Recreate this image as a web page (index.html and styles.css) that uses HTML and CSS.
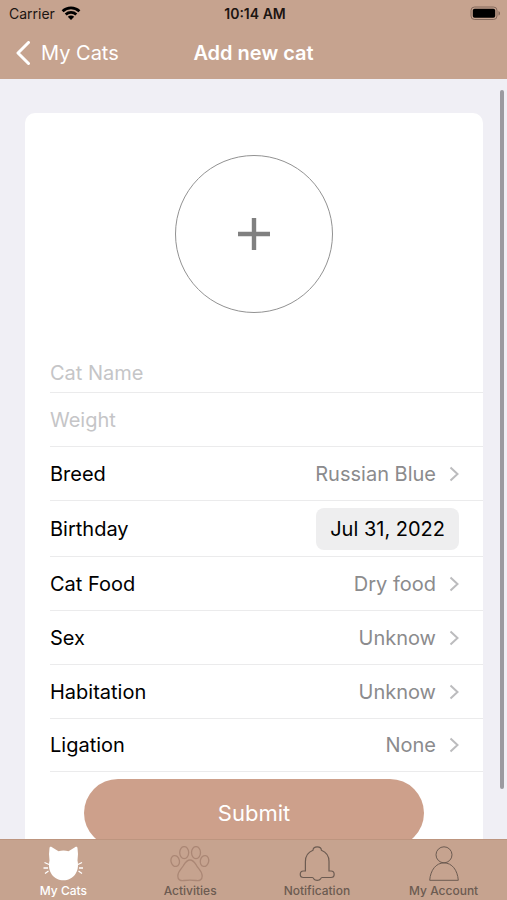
FILE: index.html
```html
<!DOCTYPE html>
<html lang="en">
<head>
<meta charset="utf-8">
<meta name="viewport" content="width=device-width, initial-scale=1">
<title>Add new cat</title>
<link rel="stylesheet" href="styles.css">
</head>
<body>
<div class="app">
  <header class="header">
    <div class="status">
      <span class="carrier">Carrier
        <svg class="wifi" viewBox="0 0 20 15" aria-hidden="true">
          <path d="M1.600 5.200C6.400 .7 13.600 .7 18.400 5.200M4.700 8.400c3-2.800 7.600-2.800 10.600 0" fill="none" stroke="currentColor" stroke-width="2.800"/>
          <path d="M6.800 10.700c1.900-1.600 4.500-1.600 6.400 0L10 14z" fill="currentColor"/>
        </svg>
      </span>
      <span class="clock">10:14 AM</span>
      <svg class="battery" viewBox="0 0 31 15" aria-label="Battery full">
        <rect x="1" y="1" width="26" height="12.500" rx="3.500" fill="none" stroke="#6d564b" stroke-opacity=".75"/>
        <rect x="2.800" y="2.800" width="22.400" height="9" rx="1.800" fill="#000"/>
        <path d="M28.500 5v4.600c2-.8 2-3.800 0-4.600z" fill="#6d564b" fill-opacity=".8"/>
      </svg>
    </div>
    <nav class="navbar">
      <a class="back" href="#cats">
        <svg class="back-icon" viewBox="0 0 14 24" aria-hidden="true"><path d="M12.500 1.500 2 12l10.500 10.500" fill="none" stroke="currentColor" stroke-width="3" stroke-linecap="round" stroke-linejoin="round"/></svg>
        My Cats
      </a>
      <h1 class="title">Add new cat</h1>
    </nav>
  </header>

  <main class="content">
    <form class="card">
      <button class="photo" type="button" aria-label="Add photo">
        <svg class="plus" viewBox="0 0 32 32" aria-hidden="true"><path d="M16 0v32M0 16h32" stroke="#808080" stroke-width="4.400"/></svg>
      </button>
      <div class="rows">
        <div class="row row-name"><input class="field" type="text" placeholder="Cat Name" aria-label="Cat Name"></div>
        <div class="row"><input class="field" type="text" placeholder="Weight" aria-label="Weight"></div>
        <div class="row">
          <label for="breed">Breed</label>
          <select class="value" id="breed"><option>Russian Blue</option></select>
          <svg class="chevron" viewBox="0 0 10 16" aria-hidden="true"><path d="m1.500 1.500 7 6.500-7 6.500"/></svg>
        </div>
        <div class="row row-date">
          <label for="birthday">Birthday</label>
          <button class="date" id="birthday" type="button">Jul 31, 2022</button>
        </div>
        <div class="row">
          <label for="food">Cat Food</label>
          <select class="value" id="food"><option>Dry food</option></select>
          <svg class="chevron" viewBox="0 0 10 16" aria-hidden="true"><path d="m1.500 1.500 7 6.500-7 6.500"/></svg>
        </div>
        <div class="row">
          <label for="sex">Sex</label>
          <select class="value" id="sex"><option>Unknow</option></select>
          <svg class="chevron" viewBox="0 0 10 16" aria-hidden="true"><path d="m1.500 1.500 7 6.500-7 6.500"/></svg>
        </div>
        <div class="row">
          <label for="habitation">Habitation</label>
          <select class="value" id="habitation"><option>Unknow</option></select>
          <svg class="chevron" viewBox="0 0 10 16" aria-hidden="true"><path d="m1.500 1.500 7 6.500-7 6.500"/></svg>
        </div>
        <div class="row">
          <label for="ligation">Ligation</label>
          <select class="value" id="ligation"><option>None</option></select>
          <svg class="chevron" viewBox="0 0 10 16" aria-hidden="true"><path d="m1.500 1.500 7 6.500-7 6.500"/></svg>
        </div>
      </div>
      <button class="submit" type="submit">Submit</button>
    </form>
    <div class="scroll-thumb"></div>
  </main>

  <nav class="tabs">
    <a class="tab active" href="#cats">
      <svg class="tab-icon" viewBox="0 0 40 36" aria-hidden="true">
        <path d="M6.500 2C6.700 .7 7.700 .5 9 1.200L15.500 5.200Q20.500 3.800 25.500 5.200L32 1.200C33.300 .5 34.300 .7 34.500 2Q35.500 8 34.500 14.500C37 26 30 34.300 20.500 34.300S4 26 6.500 14.500Q5.500 8 6.500 2z" fill="currentColor"/>
        <path d="m6 18.500-4.500-2M5 22H.5M5.500 25 2 27.500M35 18.500l4-2M36 22h4M35.500 25l3.500 2.500" stroke="currentColor" stroke-width="1.300" fill="none"/>
      </svg>
      My Cats
    </a>
    <a class="tab" href="#activities">
      <svg class="tab-icon paw" viewBox="0 0 40 36" aria-hidden="true">
        <g fill="none" stroke="currentColor" stroke-width="1.300">
          <ellipse cx="14.200" cy="6.600" rx="4.500" ry="6"/>
          <ellipse cx="26" cy="6.600" rx="4.500" ry="6"/>
          <ellipse cx="5.200" cy="15" rx="4.200" ry="5.500" transform="rotate(-12 5.200 15)"/>
          <ellipse cx="34.500" cy="15" rx="4.200" ry="5.500" transform="rotate(12 34.500 15)"/>
          <path d="M20 14c-3.500 0-5 3-6.500 5.500C11.500 23 7.800 25 7.800 30c0 3.800 2.500 5 6.200 4.500 4-.5 8-.5 12 0 3.700.5 6.200-.7 6.200-4.500 0-5-3.700-7-5.700-10.500C25 17 23.500 14 20 14z"/>
        </g>
      </svg>
      Activities
    </a>
    <a class="tab" href="#notification">
      <svg class="tab-icon" viewBox="0 0 40 36" aria-hidden="true">
        <path d="M16 4.200C16.200-.3 24.200-.3 24.400 4.200 29 6 32 10 32 15.500V25h2c4.200 0 4.200 6.500 0 6.500h-9c-.6 0-1 .5-1.400 1.300-1.300 2-5.500 2-6.800 0-.4-.8-.8-1.300-1.400-1.300h-9c-4.200 0-4.200-6.500 0-6.500h2v-9.500c0-5.500 3-9.500 7.600-11.300z" fill="none" stroke="currentColor" stroke-width="1.200"/>
      </svg>
      Notification
    </a>
    <a class="tab" href="#account">
      <svg class="tab-icon" viewBox="0 0 40 36" aria-hidden="true">
        <g fill="none" stroke="currentColor"><circle cx="20" cy="8.800" r="8"/><path d="M5.700 34.300C6.500 24 12 16.900 20 16.900S33.500 24 34.300 34.300z"/></g>
      </svg>
      My Account
    </a>
  </nav>
</div>
</body>
</html>
```
FILE: styles.css
```css
* {
  box-sizing: border-box;
}

body {
  margin: 0;
  font-family: Inter, "Liberation Sans", sans-serif;
  font-size: 20px;
  color: #000;
}

a {
  color: inherit;
  text-decoration: none;
}

button,
input,
select {
  margin: 0;
  padding: 0;
  border: 0;
  background: none;
  color: inherit;
  font: inherit;
}

svg {
  display: block;
  flex: none;
}

.app {
  display: flex;
  flex-direction: column;
  height: 100vh;
}

.header {
  flex: none;
  background: #c6a38f;
}

.status {
  display: grid;
  grid-template-columns: 1fr auto 1fr;
  align-items: center;
  height: 27px;
  padding: 0 6px 0 9px;
  font-size: 14px;
  color: #1c1512;
}

.carrier {
  display: flex;
  align-items: center;
  gap: 6px;
}

.wifi {
  width: 20px;
  height: 15px;
  color: #000;
}

.clock {
  font-weight: 600;
}

.battery {
  justify-self: end;
  width: 31px;
  height: 15px;
}

.navbar {
  display: grid;
  grid-template-columns: 1fr auto 1fr;
  align-items: center;
  height: 52px;
  padding: 0 16px;
  color: #fff;
}

.back {
  display: flex;
  align-items: center;
  gap: 11px;
}

.back-icon {
  width: 14px;
  height: 24px;
}

.title {
  margin: 0;
  font-size: 20px;
  font-weight: 600;
}

.content {
  position: relative;
  flex: 1;
  min-height: 0;
  overflow: hidden;
  padding: 34px 24px 0 25px;
  background: #f0eff5;
}

.card {
  display: flex;
  flex-direction: column;
  align-items: center;
  padding: 42px 0 24px;
  border-radius: 10px;
  background: #fff;
}

.photo {
  display: grid;
  place-items: center;
  width: 158px;
  height: 158px;
  border: 1px solid #929292;
  border-radius: 50%;
}

.plus {
  width: 32px;
  height: 32px;
}

.rows {
  align-self: stretch;
  padding: 40px 0 7px 25px;
}

.row {
  display: flex;
  align-items: center;
  gap: 13px;
  height: 54px;
  padding-right: 24px;
  border-bottom: 1px solid #ebebec;
}

.row-name {
  height: 40px;
}

.row-date {
  justify-content: space-between;
  height: 56px;
}

.row:last-child {
  height: 53px;
}

.field {
  flex: 1;
  min-width: 0;
}

.field::placeholder {
  color: #c5c5c7;
  opacity: 1;
}

.value {
  flex: 1;
  min-width: 0;
  appearance: none;
  color: #8b8b8d;
  text-align: right;
  text-align-last: right;
}

.chevron {
  width: 10px;
  height: 16px;
  fill: none;
  stroke: #bcbcbe;
  stroke-width: 2;
}

.date {
  height: 42px;
  padding: 0 14px;
  border-radius: 8px;
  background: #eeeeef;
}

.submit {
  width: 340px;
  max-width: 90%;
  height: 68px;
  border-radius: 34px;
  background: #cda08b;
  color: #fff;
  font-size: 22px;
}

.scroll-thumb {
  position: absolute;
  top: 11px;
  right: 3px;
  bottom: 50px;
  width: 4px;
  border-radius: 2px;
  background: #9b9aa0;
}

.tabs {
  display: grid;
  grid-template-columns: repeat(4, 1fr);
  flex: none;
  height: 61px;
  padding-top: 6px;
  border-top: 1px solid #bd957f;
  background: #c6a38f;
}

.tab {
  display: flex;
  flex-direction: column;
  align-items: center;
  gap: 1px;
  font-size: 12px;
  font-weight: 500;
  color: #6c5b51;
}

.tab.active {
  color: #fff;
}

.tab-icon {
  width: 40px;
  height: 36px;
}

.paw {
  color: #ab8775;
}
```
